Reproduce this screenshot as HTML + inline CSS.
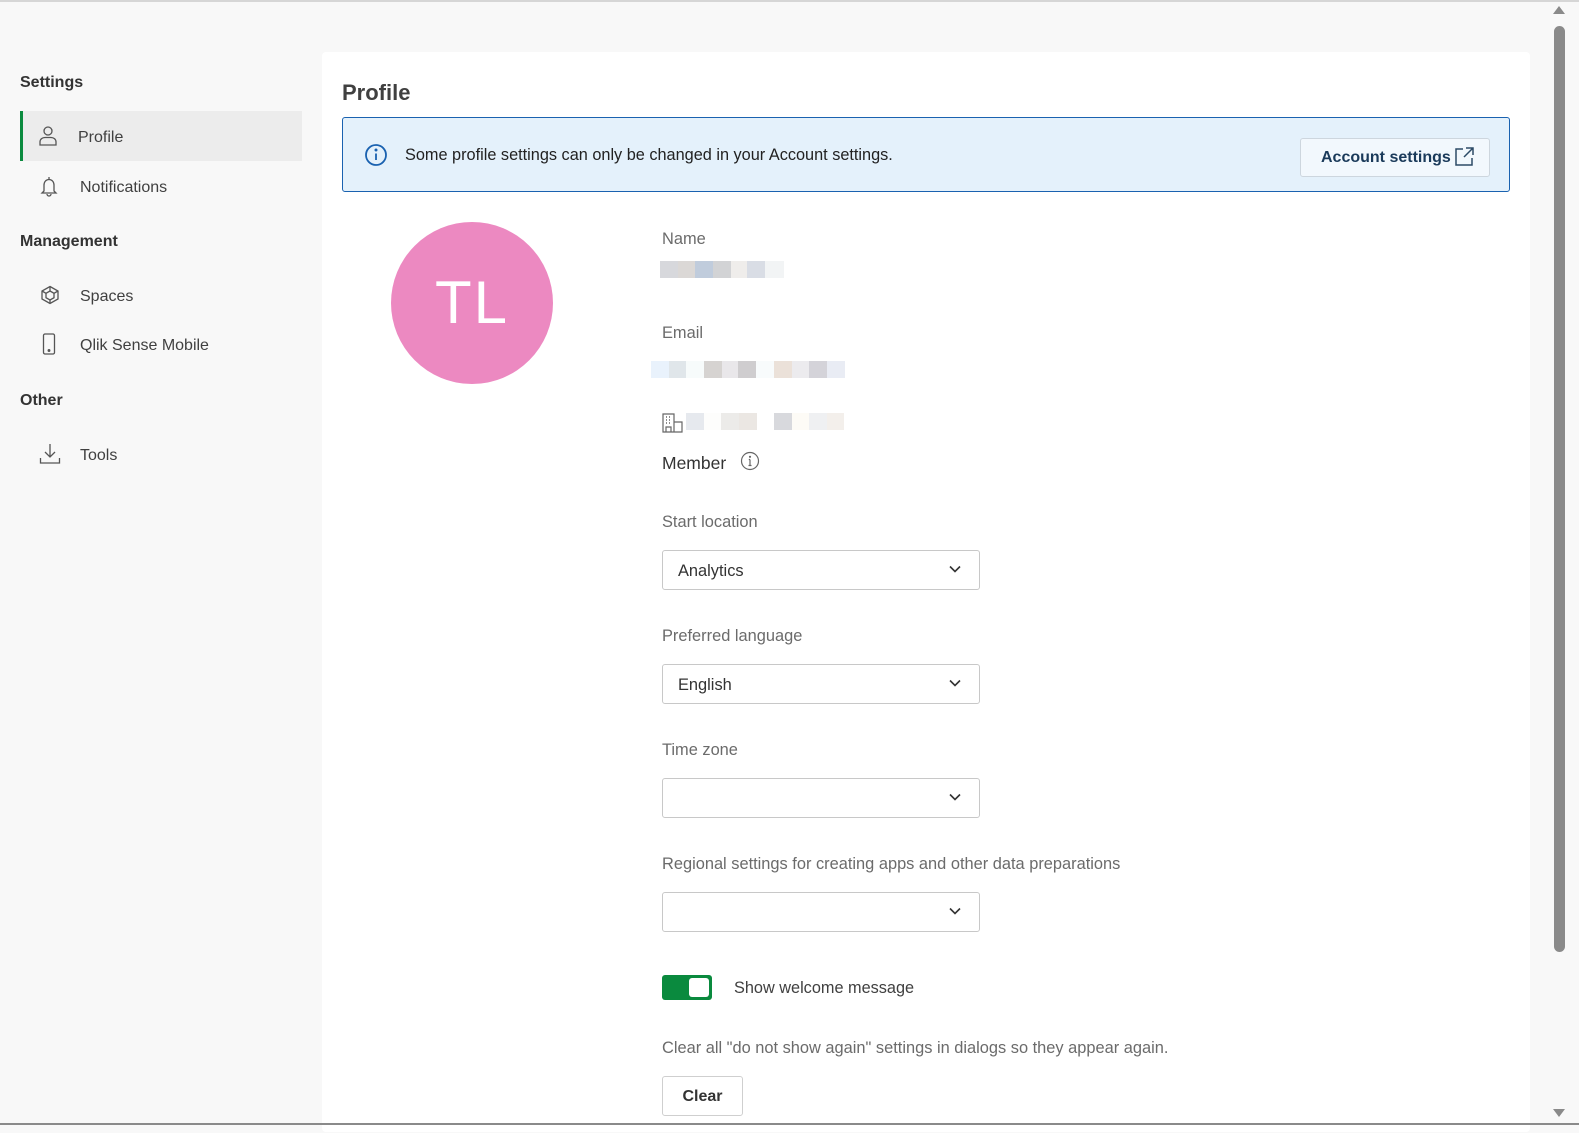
<!DOCTYPE html>
<html><head><meta charset="utf-8"><style>
*{box-sizing:border-box;margin:0;padding:0}
body{width:1579px;height:1133px;overflow:hidden;background:#f8f8f8;font-family:"Liberation Sans",sans-serif;color:#404040;position:relative}
.abs{position:absolute}
.topline{left:0;top:0;width:1579px;height:2px;background:#d6d6d6}
.botline{left:0;top:1123px;width:1579px;height:2px;background:#8a8a8a}
.h{font-weight:bold;font-size:16px;color:#333}
.item{font-size:16px;color:#404040}
.panel{left:322px;top:52px;width:1208px;height:1080px;background:#fff;border-radius:4px}
.lbl{font-size:16.4px;color:#6b6b6b}
.sel{width:318px;height:40px;border:1px solid #c8c8c8;border-radius:3px;background:#fff}
.sel span{position:absolute;left:15px;top:11px;font-size:16.4px;color:#333}
.sel svg{position:absolute;right:18px;top:14px}
.blk{position:absolute;height:17px}
</style></head><body>
<div class="abs topline"></div>
<div class="abs h" style="left:20px;top:74px">Settings</div>
<div class="abs" style="left:20px;top:111px;width:282px;height:50px;background:#ececec;border-left:3px solid #0a8a3e"></div>
<svg class="abs" style="left:38px;top:125px" width="20" height="22" viewBox="0 0 20 22" fill="none" stroke="#555" stroke-width="1.3"><circle cx="10" cy="6" r="4"/><path d="M2 20v-3c0-3 2.5-4.5 5-4.5h6c2.5 0 5 1.5 5 4.5v3z"/></svg>
<div class="abs item" style="left:78px;top:129px">Profile</div>
<svg class="abs" style="left:40px;top:175px" width="18" height="22" viewBox="0 0 18 22" fill="none" stroke="#555" stroke-width="1.3"><path d="M9 2v2M4 16V10c0-3 2-5.5 5-5.5s5 2.5 5 5.5v6l2 2H2z"/><path d="M7 19a2 2 0 0 0 4 0"/></svg>
<div class="abs item" style="left:80px;top:179px">Notifications</div>
<div class="abs h" style="left:20px;top:233px">Management</div>
<svg class="abs" style="left:40px;top:285px" width="20" height="20" viewBox="0 0 20 20" fill="none" stroke="#555" stroke-width="1.3"><path d="M10 1.5l8 4.5v8l-8 4.5-8-4.5V6z"/><path d="M10 6l4 2.3v4.4L10 15l-4-2.3V8.3z"/><path d="M10 1.5V6M18 6l-4 2.3M2 6l4 2.3M10 15v3.5"/></svg>
<div class="abs item" style="left:80px;top:288px">Spaces</div>
<svg class="abs" style="left:42px;top:333px" width="14" height="22" viewBox="0 0 14 22" fill="none" stroke="#555" stroke-width="1.3"><rect x="1.5" y="1" width="11" height="20" rx="1.5"/><circle cx="7" cy="17.5" r="0.8" fill="#555"/></svg>
<div class="abs item" style="left:80px;top:337px">Qlik Sense Mobile</div>
<div class="abs h" style="left:20px;top:392px">Other</div>
<svg class="abs" style="left:39px;top:443px" width="22" height="22" viewBox="0 0 22 22" fill="none" stroke="#555" stroke-width="1.3"><path d="M11 1v13M6 9l5 5 5-5M1.5 15v5h19v-5"/></svg>
<div class="abs item" style="left:80px;top:447px">Tools</div>

<div class="abs panel"></div>
<div class="abs" style="left:342px;top:80px;font-size:22px;font-weight:bold;color:#404040">Profile</div>
<div class="abs" style="left:342px;top:117px;width:1168px;height:75px;background:#e4f1fb;border:1px solid #1a62b0;border-radius:3px"></div>
<svg class="abs" style="left:364px;top:143px" width="24" height="24" viewBox="0 0 24 24" fill="none" stroke="#1a62b0" stroke-width="1.8"><circle cx="12" cy="12" r="10"/><path d="M12 10.5v6.5"/><circle cx="12" cy="7" r="0.6" fill="#1a62b0"/></svg>
<div class="abs" style="left:405px;top:146px;font-size:16.3px;color:#222">Some profile settings can only be changed in your Account settings.</div>
<div class="abs" style="left:1300px;top:138px;width:190px;height:39px;background:#f2f8fd;border:1px solid #cdd6de;border-radius:3px"></div>
<div class="abs" style="left:1321px;top:149px;font-size:16px;font-weight:bold;color:#1a3a5a">Account settings</div>
<svg class="abs" style="left:1454px;top:146px" width="21" height="21" viewBox="0 0 21 21" fill="none" stroke="#2c4a66" stroke-width="1.5"><path d="M9 3H2v16h16v-7M12 2h7v7M19 2l-9 9"/></svg>

<div class="abs" style="left:391px;top:222px;width:162px;height:162px;border-radius:50%;background:#ec89c1"></div>
<div class="abs" style="left:391px;top:268px;width:162px;text-align:center;font-size:60px;color:#fff;letter-spacing:2px">TL</div>

<div class="abs lbl" style="left:662px;top:230px">Name</div>
<div class="blk" style="left:660px;top:261px;width:124px;background:linear-gradient(90deg,#d7d8dc 0 18px,#dbd8d6 18px 35px,#c0ccdc 35px 53px,#d2d3d5 53px 71px,#efedeb 71px 87px,#d9dde5 87px 105px,#f2f4f5 105px)"></div>
<div class="abs lbl" style="left:662px;top:324px">Email</div>
<div class="blk" style="left:651px;top:361px;width:194px;background:linear-gradient(90deg,#e9f2fc 0 18px,#e0e6ea 18px 35px,#f7fbfb 35px 53px,#d6d3d1 53px 71px,#e9e7ea 71px 87px,#cfcdcf 87px 105px,#f8fbfc 105px 123px,#ebe1d9 123px 141px,#ecebee 141px 158px,#d4d3d9 158px 176px,#e9ecf4 176px)"></div>
<svg class="abs" style="left:662px;top:413px" width="21" height="20" viewBox="0 0 21 20" fill="none" stroke="#666" stroke-width="1.2"><path d="M1 19V1h11v18zM12 9h8v10h-8M4 19v-5h5v5"/><path d="M4 4h1M7 4h1M4 7h1M7 7h1M4 10h1M7 10h1" stroke-width="1.5"/></svg>
<div class="blk" style="left:686px;top:413px;width:158px;background:linear-gradient(90deg,#e6e9ee 0 18px,#fdfdfc 18px 35px,#ecebe9 35px 53px,#ebe7e3 53px 71px,#fff 71px 88px,#d8d9dd 88px 106px,#fdfbf6 106px 123px,#eff0f2 123px 141px,#f3efeb 141px)"></div>
<div class="abs" style="left:662px;top:453px;font-size:17.5px;color:#333">Member</div>
<svg class="abs" style="left:740px;top:451px" width="20" height="20" viewBox="0 0 20 20" fill="none" stroke="#666" stroke-width="1.2"><circle cx="10" cy="10" r="8.5"/><path d="M10 8.5v6M8.5 14.5h3M8.8 8.5H10"/><circle cx="10" cy="5.8" r="0.5" fill="#666"/></svg>

<div class="abs lbl" style="left:662px;top:513px">Start location</div>
<div class="abs sel" style="left:662px;top:550px"><span>Analytics</span><svg width="12" height="8" viewBox="0 0 12 8" fill="none" stroke="#333" stroke-width="1.6"><path d="M1 1.5l5 5 5-5"/></svg></div>
<div class="abs lbl" style="left:662px;top:627px">Preferred language</div>
<div class="abs sel" style="left:662px;top:664px"><span>English</span><svg width="12" height="8" viewBox="0 0 12 8" fill="none" stroke="#333" stroke-width="1.6"><path d="M1 1.5l5 5 5-5"/></svg></div>
<div class="abs lbl" style="left:662px;top:741px">Time zone</div>
<div class="abs sel" style="left:662px;top:778px"><svg width="12" height="8" viewBox="0 0 12 8" fill="none" stroke="#333" stroke-width="1.6"><path d="M1 1.5l5 5 5-5"/></svg></div>
<div class="abs lbl" style="left:662px;top:855px">Regional settings for creating apps and other data preparations</div>
<div class="abs sel" style="left:662px;top:892px"><svg width="12" height="8" viewBox="0 0 12 8" fill="none" stroke="#333" stroke-width="1.6"><path d="M1 1.5l5 5 5-5"/></svg></div>

<div class="abs" style="left:662px;top:975px;width:50px;height:25px;background:#0a8a3e;border-radius:3px"></div>
<div class="abs" style="left:689px;top:978px;width:20px;height:19px;background:#fff;border-radius:3px"></div>
<div class="abs" style="left:734px;top:979px;font-size:16.3px;color:#404040">Show welcome message</div>
<div class="abs lbl" style="left:662px;top:1039px">Clear all "do not show again" settings in dialogs so they appear again.</div>
<div class="abs" style="left:662px;top:1076px;width:81px;height:40px;border:1px solid #cfcfcf;border-radius:3px;background:#fff;text-align:center;font-weight:bold;font-size:16px;line-height:40px;color:#333">Clear</div>

<div class="abs" style="left:1552px;top:2px;width:27px;height:1121px;background:#f8f8f8"></div>
<div class="abs" style="left:1553px;top:6px;width:0;height:0;border-left:6px solid transparent;border-right:6px solid transparent;border-bottom:8px solid #8a8a8a"></div>
<div class="abs" style="left:1554px;top:26px;width:11px;height:926px;background:#8a8a8a;border-radius:6px"></div>
<div class="abs" style="left:1553px;top:1109px;width:0;height:0;border-left:6px solid transparent;border-right:6px solid transparent;border-top:8px solid #8a8a8a"></div>
<div class="abs botline"></div>
</body></html>
